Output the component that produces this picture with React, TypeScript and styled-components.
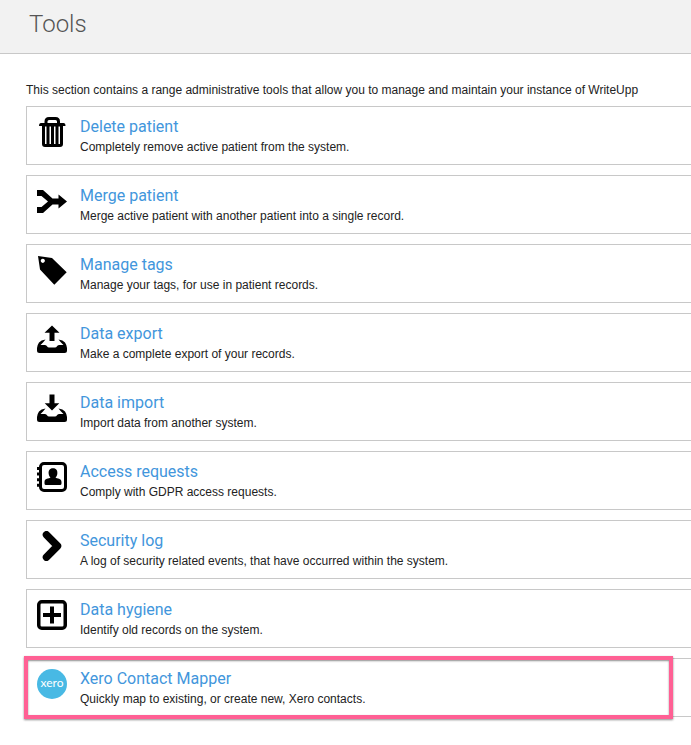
import React from "react";
import styled, { createGlobalStyle } from "styled-components";

const GlobalStyle = createGlobalStyle`
  *, *::before, *::after { box-sizing: border-box; }
  body {
    margin: 0;
    background: #fff;
    color: #222;
    font-family: "Liberation Sans", Helvetica, Arial, sans-serif;
    font-size: 12px;
    line-height: 16px;
  }
`;

const Page = styled.div`
  overflow-x: hidden;
`;

const Header = styled.header`
  height: 54px;
  padding: 8px 29px 0;
  background: #f2f2f2;
  border-bottom: 1px solid #c8c8c8;
`;

const PageTitle = styled.h1`
  margin: 0;
  color: #555;
  font-family: Roboto, sans-serif;
  font-size: 24px;
  font-weight: 300;
  line-height: 32px;
`;

const Content = styled.main`
  padding: 28px 0 24px 26px;
`;

const Intro = styled.p`
  margin: 0 0 8px;
`;

const ToolList = styled.ul`
  display: flex;
  flex-direction: column;
  gap: 10px;
  margin: 0;
  padding: 0;
  list-style: none;
`;

const ToolCard = styled.li<{ $highlighted?: boolean }>`
  position: relative;
  display: flex;
  gap: 13px;
  padding: 10px 10px 9px;
  border: 1px solid #c8c8c8;
  border-right: 0;

  &::after {
    content: "";
    display: ${(p) => (p.$highlighted ? "block" : "none")};
    position: absolute;
    inset: -3px 18px -3px -3px;
    border: 4px solid #ff6094;
    box-shadow: 0 1px 2px rgba(0, 0, 0, 0.45), inset 0 1px 2px rgba(0, 0, 0, 0.45);
    pointer-events: none;
  }
`;

const Icon = styled.svg`
  flex: none;
  width: 30px;
  height: 30px;
`;

const ToolText = styled.div`
  min-width: 0;
`;

const ToolName = styled.h2`
  margin: 0 0 3px;
  font-family: Roboto, sans-serif;
  font-size: 16px;
  font-weight: 400;
  line-height: 19px;
`;

const ToolLink = styled.a`
  color: #4296dc;
  text-decoration: none;
`;

const Description = styled.p`
  margin: 0;
`;

const LogoText = styled.text`
  fill: #fff;
  font-family: Lato, sans-serif;
  font-size: 12px;
`;

const tray = (
  <path d="M8.500 15.500 Q4 16 2 18.500 Q0 21.500 0 24 V26.500 Q0 29 2.500 29 H27.500 Q30 29 30 26.500 V24 Q30 21.500 28 18.500 Q26 16 21.500 15.500 L24 18.500 L26.500 21 H22 Q20.500 21 19.800 22.500 Q19.300 23.500 18 23.500 H12 Q10.700 23.500 10.200 22.500 Q9.500 21 8 21 H3.500 L6 18.500 Z" />
);

const tools = [
  {
    name: "Delete patient",
    description: "Completely remove active patient from the system.",
    icon: (
      <>
        <path d="M9 7 V4.5 Q9 1.5 12 1.5 H18.5 Q21.500 1.5 21.500 4.5 V7" fill="none" stroke="#000" strokeWidth="3" />
        <path d="M4 6 H26.5 Q28.5 6 28.5 9 H2 Q2 6 4 6Z" />
        <path
          fillRule="evenodd"
          d="M5 9 H26 V27 Q26 30 23 30 H8 Q5 30 5 27Z M8 9.5 V27 H9.5 V9.5Z M12.5 9.5 V27 H14 V9.5Z M17 9.5 V27 H18.500 V9.5Z M21.5 9.5 V27 H23 V9.5Z"
        />
      </>
    ),
  },
  {
    name: "Merge patient",
    description: "Merge active patient with another patient into a single record.",
    icon: (
      <path d="M0 4 H6 L15.5 12.5 H21.5 V8.5 L30 15.5 L21.5 22.5 V18.5 H15.5 L6 27 H0 V21 H4.5 L11 15.5 L4.5 10 H0Z" />
    ),
  },
  {
    name: "Manage tags",
    description: "Manage your tags, for use in patient records.",
    icon: (
      <path fillRule="evenodd" d="M1 1 L15 3 L29.7 17.2 L17.3 29.7 L3 14.5Z M5.8 3.7 a2.1 2.1 0 1 0 .01 0Z" />
    ),
  },
  {
    name: "Data export",
    description: "Make a complete export of your records.",
    icon: (
      <>
        <path d="M15 1.5 L22.5 8.8 H17.5 V17 H12.5 V8.8 H7.5Z" />
        {tray}
      </>
    ),
  },
  {
    name: "Data import",
    description: "Import data from another system.",
    icon: (
      <>
        <path d="M12.5 1.5 H17.5 V10.3 H22.3 L15 17.6 L7.7 10.3 H12.5Z" />
        {tray}
      </>
    ),
  },
  {
    name: "Access requests",
    description: "Comply with GDPR access requests.",
    icon: (
      <>
        <rect x="3.5" y="1.5" width="25" height="27" rx="3.5" fill="none" stroke="#000" strokeWidth="3" />
        <path d="M0 5h4v3H0zM0 10.6h4v3H0zM0 16.2h4v3H0zM0 21.8h4v3H0z" />
        <path d="M16 6.3 C19.5 6.3 20.8 8.8 20.3 12 C20 14 19.2 15 18.5 15.5 C20 17 24.5 16 24.5 20 V21.5 Q24.5 23 23 23 H9 Q7.5 23 7.5 21.5 V20 C7.5 16 12 17 13.5 15.5 C12.8 15 12 14 11.7 12 C11.2 8.8 12.5 6.3 16 6.3Z" />
      </>
    ),
  },
  {
    name: "Security log",
    description: "A log of security related events, that have occurred within the system.",
    icon: (
      <path
        d="M9.5 3.8 L20.5 15 L9.5 26.2"
        fill="none"
        stroke="#000"
        strokeWidth="7.5"
        strokeLinecap="round"
        strokeLinejoin="round"
      />
    ),
  },
  {
    name: "Data hygiene",
    description: "Identify old records on the system.",
    icon: (
      <>
        <rect x="1.75" y="1.75" width="26.5" height="26.5" rx="3" fill="none" stroke="#000" strokeWidth="3.5" />
        <path d="M15 6.5 V23.5 M6 15 H24" stroke="#000" strokeWidth="4" />
      </>
    ),
  },
  {
    name: "Xero Contact Mapper",
    description: "Quickly map to existing, or create new, Xero contacts.",
    highlighted: true,
    icon: (
      <>
        <circle cx="15" cy="15" r="15" fill="#48b9e4" />
        <LogoText x="15" y="18" textAnchor="middle">
          xero
        </LogoText>
      </>
    ),
  },
];

export default function App() {
  return (
    <Page>
      <GlobalStyle />
      <Header>
        <PageTitle>Tools</PageTitle>
      </Header>
      <Content>
        <Intro>
          This section contains a range administrative tools that allow you to manage and maintain your instance of
          WriteUpp
        </Intro>
        <ToolList>
          {tools.map((tool) => (
            <ToolCard key={tool.name} $highlighted={tool.highlighted}>
              <Icon viewBox="0 0 30 30" aria-hidden="true">
                {tool.icon}
              </Icon>
              <ToolText>
                <ToolName>
                  <ToolLink href="#">{tool.name}</ToolLink>
                </ToolName>
                <Description>{tool.description}</Description>
              </ToolText>
            </ToolCard>
          ))}
        </ToolList>
      </Content>
    </Page>
  );
}
